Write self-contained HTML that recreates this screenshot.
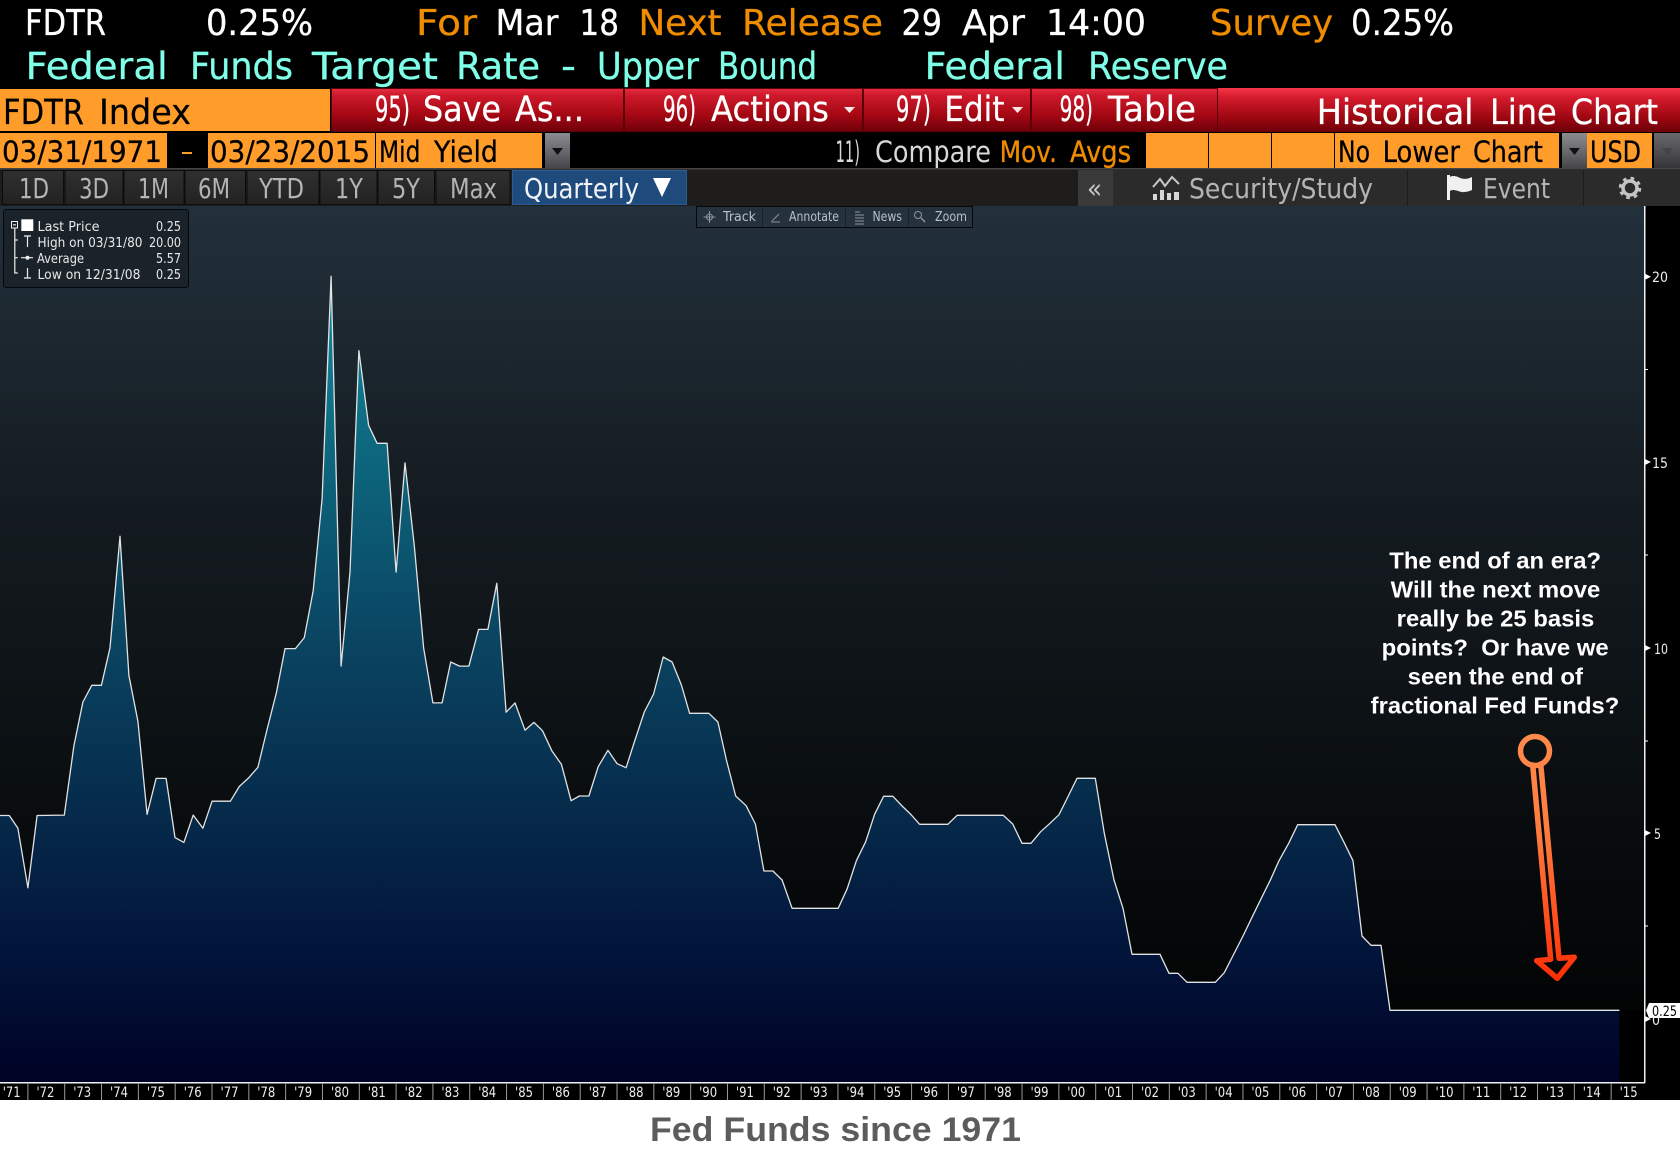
<!DOCTYPE html>
<html><head><meta charset="utf-8"><title>Fed Funds since 1971</title>
<style>
html,body{margin:0;padding:0;background:#fff;width:1680px;height:1150px;overflow:hidden}
svg{display:block}
text{font-family:"DejaVu Sans","Liberation Sans",sans-serif}
.a{font-size:36px}.b{font-size:37px}.c{font-size:35px}.d{font-size:29px}.e{font-size:27.5px;fill:#b4b4b4}
.w{fill:#fff;stroke:#fff;stroke-width:.3}.o{fill:#f08c00;stroke:#f08c00;stroke-width:.3}.y{fill:#80ffe8;stroke:#80ffe8;stroke-width:.3}.k{fill:#000;stroke:#000;stroke-width:.25}
.l{font-size:13px;fill:#e8e8e8}.t{font-size:13px;fill:#b8c0c8}.x{font-size:14px;fill:#eee}.v{font-size:14px;fill:#eee}
.n{font-family:"Liberation Sans",Arial,sans-serif;font-weight:bold;font-size:23px;fill:#fff}
</style></head><body>
<svg width="1680" height="1150" viewBox="0 0 1680 1150" xmlns="http://www.w3.org/2000/svg">
<defs>
<linearGradient id="bg" x1="0" y1="206" x2="0" y2="1082" gradientUnits="userSpaceOnUse"><stop offset="0" stop-color="#22303b"/><stop offset=".35" stop-color="#141b20"/><stop offset=".6" stop-color="#0c1114"/><stop offset="1" stop-color="#000"/></linearGradient>
<linearGradient id="ar" x1="0" y1="276" x2="0" y2="1082" gradientUnits="userSpaceOnUse"><stop offset="0" stop-color="#128ba3"/><stop offset=".2" stop-color="#0d6a80"/><stop offset=".45" stop-color="#0a4562"/><stop offset=".65" stop-color="#062c4c"/><stop offset=".85" stop-color="#021339"/><stop offset="1" stop-color="#000326"/></linearGradient>
<linearGradient id="rd" x1="0" y1="88" x2="0" y2="132" gradientUnits="userSpaceOnUse"><stop offset="0" stop-color="#e93045"/><stop offset=".15" stop-color="#cf1a2c"/><stop offset=".6" stop-color="#a60814"/><stop offset="1" stop-color="#6e0008"/></linearGradient>
<linearGradient id="rd2" x1="0" y1="88" x2="0" y2="132" gradientUnits="userSpaceOnUse"><stop offset="0" stop-color="#f8364a"/><stop offset=".2" stop-color="#d61c2e"/><stop offset=".65" stop-color="#a00812"/><stop offset="1" stop-color="#6e0008"/></linearGradient>
<linearGradient id="gy" x1="0" y1="134" x2="0" y2="168" gradientUnits="userSpaceOnUse"><stop offset="0" stop-color="#8a8a8e"/><stop offset=".5" stop-color="#6a6a6e"/><stop offset="1" stop-color="#46464a"/></linearGradient>
<linearGradient id="bt" x1="0" y1="170" x2="0" y2="205" gradientUnits="userSpaceOnUse"><stop offset="0" stop-color="#303030"/><stop offset="1" stop-color="#222"/></linearGradient>
<linearGradient id="ag" x1="0" y1="735" x2="0" y2="980" gradientUnits="userSpaceOnUse"><stop offset="0" stop-color="#ff8a4c"/><stop offset=".4" stop-color="#ff7c3e"/><stop offset="1" stop-color="#ff2e06"/></linearGradient>
</defs>
<rect width="1680" height="1100" fill="#000"/>
<rect y="1100" width="1680" height="50" fill="#fff"/>

<!-- header text -->
<text class="a w" x="25" y="35" textLength="81" lengthAdjust="spacingAndGlyphs">FDTR</text>
<text class="a w" x="206" y="35" textLength="107" lengthAdjust="spacingAndGlyphs">0.25%</text>
<text class="a o" x="416" y="35" textLength="61" lengthAdjust="spacingAndGlyphs">For</text>
<text class="a w" x="495.500" y="35" textLength="63" lengthAdjust="spacingAndGlyphs">Mar</text>
<text class="a w" x="579.500" y="35" textLength="39.500" lengthAdjust="spacingAndGlyphs">18</text>
<text class="a o" x="638.500" y="35" textLength="83" lengthAdjust="spacingAndGlyphs">Next</text>
<text class="a o" x="742" y="35" textLength="141" lengthAdjust="spacingAndGlyphs">Release</text>
<text class="a w" x="901.500" y="35" textLength="40.500" lengthAdjust="spacingAndGlyphs">29</text>
<text class="a w" x="962" y="35" textLength="63" lengthAdjust="spacingAndGlyphs">Apr</text>
<text class="a w" x="1046" y="35" textLength="100" lengthAdjust="spacingAndGlyphs">14:00</text>
<text class="a o" x="1210" y="35" textLength="123" lengthAdjust="spacingAndGlyphs">Survey</text>
<text class="a w" x="1351" y="35" textLength="103" lengthAdjust="spacingAndGlyphs">0.25%</text>
<text class="b y" x="25.700" y="79" textLength="142" lengthAdjust="spacingAndGlyphs">Federal</text>
<text class="b y" x="190" y="79" textLength="103" lengthAdjust="spacingAndGlyphs">Funds</text>
<text class="b y" x="312" y="79" textLength="126" lengthAdjust="spacingAndGlyphs">Target</text>
<text class="b y" x="456" y="79" textLength="84" lengthAdjust="spacingAndGlyphs">Rate</text>
<text class="b y" x="561" y="79" textLength="15" lengthAdjust="spacingAndGlyphs">-</text>
<text class="b y" x="597" y="79" textLength="102" lengthAdjust="spacingAndGlyphs">Upper</text>
<text class="b y" x="718" y="79" textLength="99" lengthAdjust="spacingAndGlyphs">Bound</text>
<text class="b y" x="924.600" y="79" textLength="140.400" lengthAdjust="spacingAndGlyphs">Federal</text>
<text class="b y" x="1088" y="79" textLength="140" lengthAdjust="spacingAndGlyphs">Reserve</text>

<!-- row 2 -->
<rect x="0" y="89" width="330" height="42" fill="#ff9c2a"/>
<text class="c k" x="3" y="124" textLength="81" lengthAdjust="spacingAndGlyphs">FDTR</text>
<text class="c k" x="99" y="124" textLength="92" lengthAdjust="spacingAndGlyphs">Index</text>
<rect x="331" y="88" width="1349" height="44" fill="url(#rd2)"/>
<g fill="url(#rd)" stroke="#5a0008" stroke-width="1">
<rect x="331.500" y="88.500" width="292" height="43"/>
<rect x="624.500" y="88.500" width="238" height="43"/>
<rect x="863.500" y="88.500" width="167" height="43"/>
<rect x="1031.500" y="88.500" width="186" height="43"/>
</g>
<text class="c w" x="375" y="121" textLength="35" lengthAdjust="spacingAndGlyphs">95)</text>
<text class="c w" x="423" y="121" textLength="78" lengthAdjust="spacingAndGlyphs">Save</text>
<text class="c w" x="515" y="121" textLength="69" lengthAdjust="spacingAndGlyphs">As...</text>
<text class="c w" x="663" y="121" textLength="33" lengthAdjust="spacingAndGlyphs">96)</text>
<text class="c w" x="711" y="121" textLength="118" lengthAdjust="spacingAndGlyphs">Actions</text>
<path d="M844 107h11l-5.500 6z" fill="#fff" opacity=".9"/>
<text class="c w" x="896" y="121" textLength="35" lengthAdjust="spacingAndGlyphs">97)</text>
<text class="c w" x="944.400" y="121" textLength="60" lengthAdjust="spacingAndGlyphs">Edit</text>
<path d="M1012 107h11l-5.500 6z" fill="#fff" opacity=".9"/>
<text class="c w" x="1059.600" y="121" textLength="33.400" lengthAdjust="spacingAndGlyphs">98)</text>
<text class="c w" x="1108" y="121" textLength="88" lengthAdjust="spacingAndGlyphs">Table</text>
<text class="c w" x="1316.700" y="124" textLength="156.900" lengthAdjust="spacingAndGlyphs">Historical</text>
<text class="c w" x="1490" y="124" textLength="66.700" lengthAdjust="spacingAndGlyphs">Line</text>
<text class="c w" x="1571" y="124" textLength="87" lengthAdjust="spacingAndGlyphs">Chart</text>

<!-- row 3 -->
<g fill="#ff9c2a">
<rect x="0" y="133" width="167" height="35"/>
<rect x="208" y="133" width="167" height="35"/>
<rect x="376" y="133" width="166" height="35"/>
<rect x="1146" y="133" width="62" height="35"/>
<rect x="1209" y="133" width="62" height="35"/>
<rect x="1272" y="133" width="62" height="35"/>
<rect x="1335" y="133" width="224" height="35"/>
<rect x="1587" y="133" width="65" height="35"/>
<rect x="182" y="152" width="10" height="2"/>
</g>
<text class="d k" x="2" y="162" textLength="160" lengthAdjust="spacingAndGlyphs">03/31/1971</text>
<text class="d k" x="210" y="162" textLength="160" lengthAdjust="spacingAndGlyphs">03/23/2015</text>
<text class="d k" x="379" y="162" textLength="41.500" lengthAdjust="spacingAndGlyphs">Mid</text>
<text class="d k" x="434" y="162" textLength="64" lengthAdjust="spacingAndGlyphs">Yield</text>
<rect x="545" y="133" width="25" height="35" fill="url(#gy)"/>
<path d="M552 148h11l-5.500 7z" fill="#111"/>
<text class="d" fill="#d8d8d8" x="835.600" y="162" textLength="24.400" lengthAdjust="spacingAndGlyphs">11)</text>
<text class="d" fill="#d8d8d8" x="875" y="162" textLength="116" lengthAdjust="spacingAndGlyphs">Compare</text>
<text class="d o" x="999.600" y="162" textLength="57.400" lengthAdjust="spacingAndGlyphs">Mov.</text>
<text class="d o" x="1070" y="162" textLength="61" lengthAdjust="spacingAndGlyphs">Avgs</text>
<text class="d k" x="1338" y="162" textLength="32" lengthAdjust="spacingAndGlyphs">No</text>
<text class="d k" x="1382.600" y="162" textLength="77.400" lengthAdjust="spacingAndGlyphs">Lower</text>
<text class="d k" x="1473" y="162" textLength="70" lengthAdjust="spacingAndGlyphs">Chart</text>
<rect x="1562" y="133" width="25" height="35" fill="url(#gy)"/>
<path d="M1569 148h11l-5.500 7z" fill="#111"/>
<text class="d k" x="1590" y="162" textLength="51" lengthAdjust="spacingAndGlyphs">USD</text>
<rect x="1654" y="133" width="26" height="35" fill="url(#gy)" opacity=".75"/>
<path d="M1662 148h11l-5.500 7z" fill="#444"/>

<!-- row 4 -->
<rect x="0" y="168" width="1680" height="38" fill="#1f1d1b"/>
<rect x="0" y="168" width="1680" height="1.500" fill="#454545"/>
<g fill="url(#bt)" stroke="#0c0c0c">
<rect x="2.500" y="170.500" width="61" height="34"/>
<rect x="65" y="170.500" width="58" height="34"/>
<rect x="124" y="170.500" width="60" height="34"/>
<rect x="185" y="170.500" width="60.500" height="34"/>
<rect x="247" y="170.500" width="72" height="34"/>
<rect x="320" y="170.500" width="57" height="34"/>
<rect x="378" y="170.500" width="56.500" height="34"/>
<rect x="436" y="170.500" width="74" height="34"/>
</g>
<rect x="512.500" y="170.500" width="174" height="34" fill="#1f4a7c" stroke="#2c5c94"/>
<text class="e" x="19" y="198" textLength="30" lengthAdjust="spacingAndGlyphs">1D</text>
<text class="e" x="79" y="198" textLength="30" lengthAdjust="spacingAndGlyphs">3D</text>
<text class="e" x="138" y="198" textLength="31" lengthAdjust="spacingAndGlyphs">1M</text>
<text class="e" x="198" y="198" textLength="32" lengthAdjust="spacingAndGlyphs">6M</text>
<text class="e" x="259" y="198" textLength="45" lengthAdjust="spacingAndGlyphs">YTD</text>
<text class="e" x="335" y="198" textLength="28" lengthAdjust="spacingAndGlyphs">1Y</text>
<text class="e" x="392" y="198" textLength="28" lengthAdjust="spacingAndGlyphs">5Y</text>
<text class="e" x="450" y="198" textLength="47" lengthAdjust="spacingAndGlyphs">Max</text>
<text class="e" style="fill:#f0f4f8" x="524" y="198" textLength="115" lengthAdjust="spacingAndGlyphs">Quarterly</text>
<path d="M653 178h18l-9 19z" fill="#fff"/>

<rect x="1078" y="170" width="35" height="36" fill="#3a3a3a"/>
<text class="e" style="fill:#c8c8c8" x="1087" y="198" textLength="15" lengthAdjust="spacingAndGlyphs">«</text>
<rect x="1113" y="170" width="294" height="36" fill="#2b2b2b"/>
<rect x="1408" y="170" width="175" height="36" fill="#2b2b2b"/>
<rect x="1584" y="170" width="96" height="36" fill="#2b2b2b"/>
<path d="M1153 187l7-8 5 7 7-9 7 7" fill="none" stroke="#c8c8c8" stroke-width="2"/>
<path d="M1153 194h4v6h-4zM1160 190h4v10h-4zM1167 193h4v7h-4zM1174 192h5v8h-5z" fill="#d8d8d8"/>
<text class="e" x="1189" y="198" textLength="184" lengthAdjust="spacingAndGlyphs">Security/Study</text>
<path d="M1447 175v25h3v-9c5-3 9 2 15 1 3-.500 5-1 7-2v-13c-6 3-10 2-14 0-4-1.500-7-1-8 0v-2z" fill="#f0f0f0"/>
<text class="e" x="1483" y="198" textLength="67" lengthAdjust="spacingAndGlyphs">Event</text>
<circle cx="1630" cy="188" r="7" fill="none" stroke="#c4c4c4" stroke-width="3.500"/>
<circle cx="1630" cy="188" r="9.500" fill="none" stroke="#c4c4c4" stroke-width="3.500" stroke-dasharray="3.500 4"/>

<!-- chart -->
<rect x="0" y="206" width="1644" height="876" fill="url(#bg)"/>
<polygon fill="url(#ar)" points="0,1082 0,815.5 9.3,815.5 17.9,828.2 27.9,887.8 37.1,815.5 64.3,815.1 73.9,745.7 82.9,702 91.8,685.3 101.4,685.3 110,647.8 120,536.3 128.9,675.5 137.9,721.2 147.1,814.3 156.1,778.4 166.1,778.4 175,837.6 183.9,842.4 193.2,815.1 202.9,828.2 212.1,801.2 230.4,801.2 239.3,786.5 248.9,777.6 257.9,767.3 267.1,729.4 276.4,692.7 285,648.6 295.4,648.6 304.3,637.6 313.2,590.6 322.1,498.8 331.1,276.3 341.1,666.1 350,572.2 358.9,350.6 368.6,425.3 377.1,443.3 387.1,443.3 396.1,572.2 405,462.9 414.3,545.7 423.6,647.8 432.9,702.9 442.1,702.9 450.7,662 459.6,666.1 468.9,666.1 478.6,629.4 487.9,629.4 496.8,583.3 506.1,712.2 515,702.9 525,730.2 533.9,722.4 542.5,730.7 551.8,750.7 561.4,764.3 571.1,800.7 579.3,796 588.9,796 598.2,766.7 607.9,750.3 617.1,763.7 626.1,767.7 635,740 644.3,712 653.6,694 663.2,657 672.1,662 681.4,685 689.6,713.3 708.9,713.3 717.9,722 726.4,760 735.7,796 746.1,805.7 755.4,824 763.9,871 772.9,871 782.1,880 792.1,908.3 838.2,908.3 847.1,889 856.4,860.7 865.7,841.7 874.6,814.3 883.6,796.3 892.9,796.3 902.1,806 911.4,815 919.6,824.3 947.9,824.3 957.1,815.3 1003.3,815.3 1012.7,824 1022,843.3 1031,843.3 1040.7,831.7 1050,823.3 1059,814.7 1068.3,796 1077,778.3 1095.3,778.3 1104.3,833.3 1114,880 1123,908.3 1132,954.3 1160,954.3 1169,973.3 1178,973.3 1187,982.3 1215.3,982.3 1224.3,972.7 1233.3,955 1243,936 1252.3,916.7 1261.3,898.3 1270.7,879.3 1279,860.7 1288.7,843.3 1297.7,824.7 1335,824.7 1344,842.3 1353,860.7 1357.7,900 1362,936 1371,945.3 1381,945.3 1390,1010.3 1619.4,1010.3 1619.4,1082"/>
<rect x="1619.4" y="1010.3" width="24.600" height="71.700" fill="#000"/>
<polyline fill="none" stroke="#e2e2e2" stroke-width="1.300" stroke-linejoin="round" points="0,815.5 9.3,815.5 17.9,828.2 27.9,887.8 37.1,815.5 64.3,815.1 73.9,745.7 82.9,702 91.8,685.3 101.4,685.3 110,647.8 120,536.3 128.9,675.5 137.9,721.2 147.1,814.3 156.1,778.4 166.1,778.4 175,837.6 183.9,842.4 193.2,815.1 202.9,828.2 212.1,801.2 230.4,801.2 239.3,786.5 248.9,777.6 257.9,767.3 267.1,729.4 276.4,692.7 285,648.6 295.4,648.6 304.3,637.6 313.2,590.6 322.1,498.8 331.1,276.3 341.1,666.1 350,572.2 358.9,350.6 368.6,425.3 377.1,443.3 387.1,443.3 396.1,572.2 405,462.9 414.3,545.7 423.6,647.8 432.9,702.9 442.1,702.9 450.7,662 459.6,666.1 468.9,666.1 478.6,629.4 487.9,629.4 496.8,583.3 506.1,712.2 515,702.9 525,730.2 533.9,722.4 542.5,730.7 551.8,750.7 561.4,764.3 571.1,800.7 579.3,796 588.9,796 598.2,766.7 607.9,750.3 617.1,763.7 626.1,767.7 635,740 644.3,712 653.6,694 663.2,657 672.1,662 681.4,685 689.6,713.3 708.9,713.3 717.9,722 726.4,760 735.7,796 746.1,805.7 755.4,824 763.9,871 772.9,871 782.1,880 792.1,908.3 838.2,908.3 847.1,889 856.4,860.7 865.7,841.7 874.6,814.3 883.6,796.3 892.9,796.3 902.1,806 911.4,815 919.6,824.3 947.9,824.3 957.1,815.3 1003.3,815.3 1012.7,824 1022,843.3 1031,843.3 1040.7,831.7 1050,823.3 1059,814.7 1068.3,796 1077,778.3 1095.3,778.3 1104.3,833.3 1114,880 1123,908.3 1132,954.3 1160,954.3 1169,973.3 1178,973.3 1187,982.3 1215.3,982.3 1224.3,972.7 1233.3,955 1243,936 1252.3,916.7 1261.3,898.3 1270.7,879.3 1279,860.7 1288.7,843.3 1297.7,824.7 1335,824.7 1344,842.3 1353,860.7 1357.7,900 1362,936 1371,945.3 1381,945.3 1390,1010.3 1619.4,1010.3"/>

<!-- axes -->
<rect x="1644" y="206" width="1.500" height="877" fill="#f0f0f0"/>
<rect x="0" y="1082" width="1645" height="1.500" fill="#f0f0f0"/>
<g fill="#fff">
<path d="M1645 273.700l6 3-6 3zM1645 459l6 3-6 3zM1645 645l6 3-6 3zM1645 830l6 3-6 3zM1645 1016l6 3-6 3z"/>
<rect x="1645" y="554.500" width="3" height="1"/><rect x="1645" y="740.500" width="3" height="1"/><rect x="1645" y="925.500" width="3" height="1"/><rect x="1645" y="369" width="3" height="1"/>
</g>
<text class="v" x="1652" y="282" textLength="16" lengthAdjust="spacingAndGlyphs">20</text>
<text class="v" x="1652" y="468" textLength="16" lengthAdjust="spacingAndGlyphs">15</text>
<text class="v" x="1654" y="654" textLength="14" lengthAdjust="spacingAndGlyphs">10</text>
<text class="v" x="1654" y="839" textLength="7" lengthAdjust="spacingAndGlyphs">5</text>
<text class="v" x="1652" y="1025" textLength="8" lengthAdjust="spacingAndGlyphs">0</text>
<path d="M1646 1010.500l3-7.500h31v15h-31z" fill="#fff"/>
<text font-size="14" fill="#000" x="1652" y="1016" textLength="25" lengthAdjust="spacingAndGlyphs">0.25</text>

<!-- x axis labels -->
<line x1="27.4" y1="1091.500" x2="1612" y2="1091.500" stroke="#999" stroke-width="17" stroke-dasharray="1 35.820"/>
<g>
<text class="x" x="2.700" y="1097" textLength="18" lengthAdjust="spacingAndGlyphs">'71</text>
<text class="x" x="36.400" y="1097" textLength="18" lengthAdjust="spacingAndGlyphs">'72</text>
<text class="x" x="73.200" y="1097" textLength="18" lengthAdjust="spacingAndGlyphs">'73</text>
<text class="x" x="110" y="1097" textLength="18" lengthAdjust="spacingAndGlyphs">'74</text>
<text class="x" x="146.900" y="1097" textLength="18" lengthAdjust="spacingAndGlyphs">'75</text>
<text class="x" x="183.700" y="1097" textLength="18" lengthAdjust="spacingAndGlyphs">'76</text>
<text class="x" x="220.500" y="1097" textLength="18" lengthAdjust="spacingAndGlyphs">'77</text>
<text class="x" x="257.300" y="1097" textLength="18" lengthAdjust="spacingAndGlyphs">'78</text>
<text class="x" x="294.100" y="1097" textLength="18" lengthAdjust="spacingAndGlyphs">'79</text>
<text class="x" x="331" y="1097" textLength="18" lengthAdjust="spacingAndGlyphs">'80</text>
<text class="x" x="367.800" y="1097" textLength="18" lengthAdjust="spacingAndGlyphs">'81</text>
<text class="x" x="404.600" y="1097" textLength="18" lengthAdjust="spacingAndGlyphs">'82</text>
<text class="x" x="441.400" y="1097" textLength="18" lengthAdjust="spacingAndGlyphs">'83</text>
<text class="x" x="478.200" y="1097" textLength="18" lengthAdjust="spacingAndGlyphs">'84</text>
<text class="x" x="515" y="1097" textLength="18" lengthAdjust="spacingAndGlyphs">'85</text>
<text class="x" x="551.900" y="1097" textLength="18" lengthAdjust="spacingAndGlyphs">'86</text>
<text class="x" x="588.700" y="1097" textLength="18" lengthAdjust="spacingAndGlyphs">'87</text>
<text class="x" x="625.500" y="1097" textLength="18" lengthAdjust="spacingAndGlyphs">'88</text>
<text class="x" x="662.300" y="1097" textLength="18" lengthAdjust="spacingAndGlyphs">'89</text>
<text class="x" x="699.100" y="1097" textLength="18" lengthAdjust="spacingAndGlyphs">'90</text>
<text class="x" x="735.900" y="1097" textLength="18" lengthAdjust="spacingAndGlyphs">'91</text>
<text class="x" x="772.800" y="1097" textLength="18" lengthAdjust="spacingAndGlyphs">'92</text>
<text class="x" x="809.600" y="1097" textLength="18" lengthAdjust="spacingAndGlyphs">'93</text>
<text class="x" x="846.400" y="1097" textLength="18" lengthAdjust="spacingAndGlyphs">'94</text>
<text class="x" x="883.200" y="1097" textLength="18" lengthAdjust="spacingAndGlyphs">'95</text>
<text class="x" x="920" y="1097" textLength="18" lengthAdjust="spacingAndGlyphs">'96</text>
<text class="x" x="956.900" y="1097" textLength="18" lengthAdjust="spacingAndGlyphs">'97</text>
<text class="x" x="993.700" y="1097" textLength="18" lengthAdjust="spacingAndGlyphs">'98</text>
<text class="x" x="1030.500" y="1097" textLength="18" lengthAdjust="spacingAndGlyphs">'99</text>
<text class="x" x="1067.300" y="1097" textLength="18" lengthAdjust="spacingAndGlyphs">'00</text>
<text class="x" x="1104.100" y="1097" textLength="18" lengthAdjust="spacingAndGlyphs">'01</text>
<text class="x" x="1141" y="1097" textLength="18" lengthAdjust="spacingAndGlyphs">'02</text>
<text class="x" x="1177.800" y="1097" textLength="18" lengthAdjust="spacingAndGlyphs">'03</text>
<text class="x" x="1214.600" y="1097" textLength="18" lengthAdjust="spacingAndGlyphs">'04</text>
<text class="x" x="1251.400" y="1097" textLength="18" lengthAdjust="spacingAndGlyphs">'05</text>
<text class="x" x="1288.200" y="1097" textLength="18" lengthAdjust="spacingAndGlyphs">'06</text>
<text class="x" x="1325" y="1097" textLength="18" lengthAdjust="spacingAndGlyphs">'07</text>
<text class="x" x="1361.900" y="1097" textLength="18" lengthAdjust="spacingAndGlyphs">'08</text>
<text class="x" x="1398.700" y="1097" textLength="18" lengthAdjust="spacingAndGlyphs">'09</text>
<text class="x" x="1435.500" y="1097" textLength="18" lengthAdjust="spacingAndGlyphs">'10</text>
<text class="x" x="1472.300" y="1097" textLength="18" lengthAdjust="spacingAndGlyphs">'11</text>
<text class="x" x="1509.100" y="1097" textLength="18" lengthAdjust="spacingAndGlyphs">'12</text>
<text class="x" x="1546" y="1097" textLength="18" lengthAdjust="spacingAndGlyphs">'13</text>
<text class="x" x="1582.800" y="1097" textLength="18" lengthAdjust="spacingAndGlyphs">'14</text>
<text class="x" x="1619.600" y="1097" textLength="18" lengthAdjust="spacingAndGlyphs">'15</text>
</g>

<!-- legend -->
<rect x="3.500" y="209.500" width="185" height="78" rx="3" fill="#1b232a" stroke="#05080a"/>
<rect x="21.300" y="219.300" width="12" height="11.700" fill="#fff"/>
<rect x="11.500" y="221.500" width="6" height="6.500" fill="none" stroke="#eee"/>
<path d="M13 224.800h3M14.800 228v45h3M14.800 240h3M14.800 257.700h3M24 236h7M27.500 236v11M21 257.700h12M24 278h7M27.500 268v10" stroke="#eee" stroke-width="1.200" fill="none"/>
<circle cx="27.500" cy="257.700" r="2" fill="#eee"/>
<text class="l" x="37.500" y="231" textLength="62" lengthAdjust="spacingAndGlyphs">Last Price</text>
<text class="l" x="156" y="231" textLength="25" lengthAdjust="spacingAndGlyphs">0.25</text>
<text class="l" x="37.500" y="247" textLength="105" lengthAdjust="spacingAndGlyphs">High on 03/31/80</text>
<text class="l" x="149" y="247" textLength="32" lengthAdjust="spacingAndGlyphs">20.00</text>
<text class="l" x="37" y="263" textLength="47" lengthAdjust="spacingAndGlyphs">Average</text>
<text class="l" x="156" y="263" textLength="25" lengthAdjust="spacingAndGlyphs">5.57</text>
<text class="l" x="37.500" y="279" textLength="103" lengthAdjust="spacingAndGlyphs">Low on 12/31/08</text>
<text class="l" x="156" y="279" textLength="25" lengthAdjust="spacingAndGlyphs">0.25</text>

<!-- toolbar -->
<rect x="696.500" y="206.500" width="276" height="21" fill="#25323d" stroke="#05080a"/>
<path d="M762.500 207v20M845.500 207v20M908.500 207v20" stroke="#18222a"/>
<g fill="none" stroke="#8c949c">
<circle cx="709.500" cy="217" r="3"/><path d="M709.500 211v12M703.500 217h12"/>
<path d="M771 222h9M772 221l7-7"/>
<path d="M855 212h5M855 215h9M855 218h9M855 221h9M855 224h9"/>
<circle cx="918" cy="215" r="3.500"/><path d="M921 218l4 4" stroke-width="1.500"/>
</g>
<text class="t" x="723" y="221" textLength="33" lengthAdjust="spacingAndGlyphs">Track</text>
<text class="t" x="789" y="221" textLength="50" lengthAdjust="spacingAndGlyphs">Annotate</text>
<text class="t" x="872.500" y="221" textLength="29.500" lengthAdjust="spacingAndGlyphs">News</text>
<text class="t" x="935" y="221" textLength="32" lengthAdjust="spacingAndGlyphs">Zoom</text>

<!-- annotation -->
<text class="n" x="1389.300" y="568.500" textLength="211.700" lengthAdjust="spacingAndGlyphs">The end of an era?</text>
<text class="n" x="1390.700" y="597.500" textLength="209.600" lengthAdjust="spacingAndGlyphs">Will the next move</text>
<text class="n" x="1396.700" y="626.500" textLength="197.600" lengthAdjust="spacingAndGlyphs">really be 25 basis</text>
<text class="n" x="1381.700" y="655.500" textLength="227" lengthAdjust="spacingAndGlyphs" xml:space="preserve">points?  Or have we</text>
<text class="n" x="1407.700" y="684.500" textLength="175.300" lengthAdjust="spacingAndGlyphs">seen the end of</text>
<text class="n" x="1370.700" y="713.500" textLength="248.600" lengthAdjust="spacingAndGlyphs">fractional Fed Funds?</text>

<!-- arrow -->
<g fill="none" stroke="url(#ag)" stroke-width="5.500" stroke-linejoin="round" stroke-linecap="round">
<circle cx="1535" cy="751" r="14.500"/>
<path d="M1532.700 765L1550.700 959.300 1536.700 960.700 1557.300 978.300 1574.300 957.300 1559 958.300 1540.700 764"/>
</g>

<!-- caption -->
<text x="650" y="1141" fill="#5c5c5c" style="font-family:'Liberation Sans',Arial,sans-serif;font-weight:bold;font-size:34.500px" textLength="371" lengthAdjust="spacingAndGlyphs">Fed Funds since 1971</text>
</svg>
</body></html>
